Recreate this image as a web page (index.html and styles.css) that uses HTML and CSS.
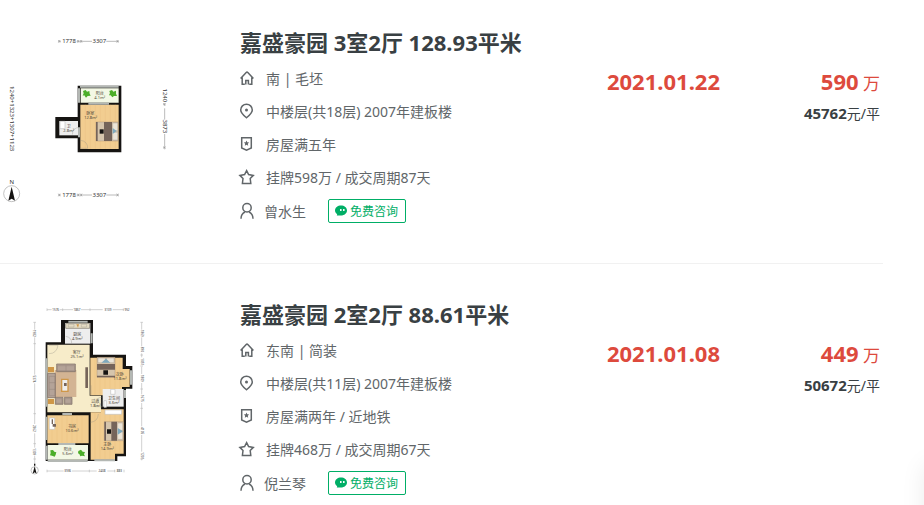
FILE: index.html
```html
<!DOCTYPE html>
<html lang="zh-CN">
<head>
    <meta charset="UTF-8">
    <meta name="viewport" content="width=device-width, initial-scale=1.0">
    <title>嘉盛豪园 成交记录</title>
    <link rel="stylesheet" href="styles.css">
</head>
<body>
    <!-- Shared icons -->
    <svg class="sprite" aria-hidden="true">
        <symbol id="icon-house" viewBox="0 0 14 14">
            <path d="M.6 7.6 6.2 1.5q.8-.8 1.6 0l5.6 6.1M2.2 6.4v6.8h2.6M11.8 6.4v6.8H9.2"/>
            <path d="M5.8 13.6V9.4h2.6v4.2"/>
        </symbol>
        <symbol id="icon-pin" viewBox="0 0 14 14">
            <path d="M6.5 13.8C3.5 11.2.7 9 .7 6a5.800 5.800 0 0 1 11.600 0c0 3-2.800 5.200-5.800 7.800z"/>
            <circle class="solid" cx="6.5" cy="6" r="1.500"/>
        </symbol>
        <symbol id="icon-badge" viewBox="0 0 14 14">
            <path d="M1.700.8h9.600v10.200L6.500 13.200 1.700 11z"/>
            <path class="solid" d="m6.500 3.500.8 1.800 1.900.2-1.400 1.300.4 1.900-1.700-1-1.700 1 .4-1.900-1.400-1.300 1.900-.2z"/>
        </symbol>
        <symbol id="icon-star" viewBox="0 0 14 14">
            <path d="m6.600.6 2 4 4.700.8-3.100 3.100.6 4.900H2.400L3 8.500-.1 5.400l4.700-.8z"/>
        </symbol>
        <symbol id="icon-person" viewBox="0 0 14 16">
            <circle cx="7" cy="4.800" r="4.200"/>
            <path d="M1 15.800c0-3.400 1.600-5.700 4-6.800M13 15.800c0-3.400-1.600-5.700-4-6.800"/>
        </symbol>
        <symbol id="icon-chat" viewBox="0 0 12 12">
            <path class="solid" d="M6 .5c3.300 0 6 2.100 6 4.900s-2.700 5-6 5H1.800l.4-1.400C.8 8.200 0 6.900 0 5.400 0 2.600 2.700.5 6 .5z"/>
            <path class="dots" d="M5.800 4v2M8.800 4v2"/>
        </symbol>
    </svg>

    <ul class="deal-list">
        <li class="deal">
            <a class="photo" href="#" aria-label="嘉盛豪园 3室2厅 户型图">
                <svg viewBox="0 21 600 600">
                    <!-- Dimensions -->
                    <g class="dim">
                        <text x="207" y="70">1778</text>
                        <text x="298" y="70">3307</text>
                        <text x="207" y="531">1778</text>
                        <text x="298" y="531">3307</text>
                        <text transform="translate(30 296) rotate(90)">1240+1323+1307+1123</text>
                        <text transform="translate(488 226) rotate(90)">1240</text>
                        <text transform="translate(488 319) rotate(90)">3873</text>
                        <path d="M175 64h8M230 64h46M319 64h38M175 525h8M230 525h46M319 525h38M494 250v8M494 265v34M494 342v46M34 205h5M34 385h5"/>
                        <path d="m175 60 5 8m-5 0 5-8m52 0 5 8m-5 0 5-8m4 0 5 8m-5 0 5-8m104 0 5 8m-5 0 5-8M175 521l5 8m-5 0 5-8m52 0 5 8m-5 0 5-8m4 0 5 8m-5 0 5-8m104 0 5 8m-5 0 5-8m134-271 8 5m-8 0 8-5m-8 130 8 5m-8 0 8-5"/>
                    </g>
                    <!-- Rooms -->
                    <path class="wall" d="M233 197h131v200H233v-42h-67v-64h67z"/>
                    <path class="tile" d="M178 303h56v43h-56z"/>
                    <path class="terrace" d="M242 205h114v43H242z"/>
                    <path class="wood" d="M241 254h115v133H241z"/>
                    <path class="plank" d="M256 254v133M271 254v133M286 254v133M301 254v133M316 254v133M331 254v133M346 254v133"/>
                    <path class="glass" d="M240 200h116M237 205v43M265 251h62M237 322v30"/>
                    <path class="door" d="M241 322q-24 0-24 22M241 361q22 2 22 24h-22"/>
                    <path class="fixture" d="M180 304h15v22h-15z"/>
                    <!-- Bed -->
                    <path class="quilt" d="M288 306h66v57h-66z"/>
                    <path class="blanket" d="M312 306h24v57h-24zM288 306h5v57h-5z"/>
                    <path class="pillow" d="M338 309h15v23h-15zM338 337h15v23h-15z"/>
                    <path class="blue" d="m338 324 12 9-12 9z"/>
                    <path class="wall" d="M299 328h12v13h-12z"/>
                    <path class="plant" d="m249 213 8-3 4 5 7-2 1 8 3 6-9 1-5 5-5-7-5 1 3-7zM328 213l8-3 4 5 8-3 0 9 3 7-9 0-5 4-5-6-5 0 3-7z"/>
                    <g class="room">
                        <text x="299" y="226">阳台</text>
                        <text x="299" y="238">4.1m²</text>
                        <text x="271" y="285">卧室</text>
                        <text x="272" y="298">12.8m²</text>
                        <text x="206" y="323">卫</text>
                        <text x="206" y="335">2.8m²</text>
                    </g>
                    <!-- Compass -->
                    <circle class="ring" cx="35" cy="521" r="24"/>
                    <path class="wall" d="m35 500 10 42-10-6-10 6z"/>
                    <text class="north" x="35" y="491">N</text>
                </svg>
            </a>
            <div class="info">
                <h2><a href="#">嘉盛豪园 3室2厅 128.93平米</a></h2>
                <p class="row"><svg class="icon"><use href="#icon-house"/></svg>南 | 毛坯</p>
                <p class="row"><svg class="icon"><use href="#icon-pin"/></svg>中楼层(共18层) 2007年建板楼</p>
                <p class="row"><svg class="icon"><use href="#icon-badge"/></svg>房屋满五年</p>
                <p class="row"><svg class="icon"><use href="#icon-star"/></svg>挂牌598万 / 成交周期87天</p>
                <div class="row agent">
                    <svg class="icon person"><use href="#icon-person"/></svg>
                    <a href="#">曾水生</a>
                    <button class="chat" type="button"><svg><use href="#icon-chat"/></svg>免费咨询</button>
                </div>
            </div>
            <div class="date">2021.01.22</div>
            <div class="price">
                <div class="total"><strong>590</strong> 万</div>
                <div class="unit"><strong>45762</strong>元/平</div>
            </div>
        </li>

        <li class="deal">
            <a class="photo" href="#" aria-label="嘉盛豪园 2室2厅 户型图">
                <svg viewBox="-60 12 600 600">
                    <!-- Dimensions -->
                    <g class="dim small">
                        <text x="107" y="48">1576</text>
                        <text x="171" y="48">1867</text>
                        <text x="264" y="48">3109</text>
                        <text x="321" y="48">952</text>
                        <text x="143" y="532">3936</text>
                        <text x="246" y="532">2408</text>
                        <text x="298" y="532">883</text>
                        <text transform="translate(40 115) rotate(90)">1982</text>
                        <text transform="translate(40 252) rotate(90)">5374</text>
                        <text transform="translate(40 400) rotate(90)">2362</text>
                        <text transform="translate(40 470) rotate(90)">1309</text>
                        <text transform="translate(362 115) rotate(90)">1869</text>
                        <text transform="translate(362 163) rotate(90)">890</text>
                        <text transform="translate(362 200) rotate(90)">1051</text>
                        <text transform="translate(362 250) rotate(90)">1809</text>
                        <text transform="translate(362 310) rotate(90)">1675</text>
                        <text transform="translate(362 407) rotate(90)">4105</text>
                        <text transform="translate(362 482) rotate(90)">1201</text>
                        <path d="M81 44h14M119 44h40M183 44h65M278 44h34M81 528h50M156 528h74M262 528h24M44 82v22M44 127v112M44 265v122M44 415v43M44 482v28M365 82v22M365 127v27M365 175v12M365 215v22M365 264v34M365 324v70M365 420v50M365 492v4"/>
                        <path d="M81 40v8M128 40v8M210 40v8M310 40v8M81 524v8M208 524v8M284 524v8M312 524v8M40 82h8M40 146h8M40 356h8M40 446h8M40 492h8M361 82h8M361 180h8M361 213h8M361 282h8M361 340h8M361 492h8"/>
                    </g>
                    <!-- Rooms -->
                    <path class="wall" d="M123 75h96v104h99v34h19v68h-19v203h-26v14H77V142h46z"/>
                    <path class="tile" d="M135 84h76v62h-76z"/>
                    <path class="living" d="M82 149h127v153h34v50H82z"/>
                    <path class="wood" d="M211 188h97v34h21v54h-23v25h-95zM82 361h124v84H82zM212 352h31v-9h68v133h-26v18h-73z"/>
                    <path class="plank" d="M225 188v112M240 188v112M255 188v112M270 188v112M285 188v112M300 188v112M96 361v84M111 361v84M126 361v84M141 361v84M156 361v84M171 361v84M186 361v84M225 352v142M240 352v142M255 343v151M270 343v151M285 343v133M300 343v133"/>
                    <path class="tile" d="M248 282h63v53h-63z"/>
                    <path class="terrace" d="M83 450h121v44H83z"/>
                    <path class="glass" d="M145 80h58M215 115v30M79 190v145M79 365v70M127 357h29M115 447h51M80 452v42M83 498h120M333 226v43M315 285v24M223 496h62"/>
                    <path class="door" d="M137 124q19 3 18 22M87 176q23 0 27-25H87M212 382q22-3 23-25M247 306q-23 2-23 29h24M213 301v-30M243 311v30"/>
                    <!-- Kitchen counter -->
                    <path class="counter" d="M137 85h72v15h-72z"/>
                    <path class="door" d="M145 88h17v8h-17zM184 88h16v8h-16z"/>
                    <path class="gold" d="M169 88h8l-3 10z"/>
                    <!-- Living room furniture -->
                    <path class="rug" d="M104 225h65v81h-65z"/>
                    <path class="sofa" d="M110 207h56v23h-56zM83 235h23v73H83zM106 307h23v21h-23zM133 307h23v21h-23z"/>
                    <path class="line" d="M112 212h52v15h-52zM138 212v15M88 244h17v58H88zM88 263h17M88 283h17M108 311h18v14h-18zM135 311h18v14h-18z"/>
                    <path class="gold" d="M84 216h18v16H84zM84 312h18v15H84zM123 251h23v40h-23z"/>
                    <path class="tile" d="M127 255h15v32h-15z"/>
                    <path class="blanket" d="M132 264h8v9h-8zM196 217h8v62h-8z"/>
                    <!-- Beds -->
                    <path class="quilt" d="M231 187h54v60h-54zM253 380h57v57h-57z"/>
                    <path class="blanket" d="M231 207h54v17h-54zM231 242h54v5h-54zM274 380h17v57h-17zM253 380h5v57h-5z"/>
                    <path class="pillow" d="M234 189h22v14h-22zM260 189h22v14h-22zM293 384h15v22h-15zM293 411h15v22h-15z"/>
                    <path class="blue" d="m244 203 14-12 13 12zM293 399l16 10-16 10z"/>
                    <path class="wall" d="M250 226h14v13h-14zM261 403h12v13h-12z"/>
                    <path class="fixture" d="M255 345h50v13h-50zM252 317h7v20h-7zM88 369h16v34H88zM272 283h13v15h-13z"/>
                    <path class="blanket" d="M95 373h4v14h-4zM98 387h10v8H98z"/>
                    <path class="plant" d="m91 466 8-1 4 5 6 2-2 7-3 6-8-3-6-1 2-7zM175 468l8-4 5 6 7 1-3 7 3 6-9-2-5 2-3-7-4-2z"/>
                    <g class="room">
                        <text x="172" y="122">厨房</text>
                        <text x="172" y="134">4.9m²</text>
                        <text x="170" y="178">客厅</text>
                        <text x="171" y="190">25.1m²</text>
                        <text x="299" y="242">次卧</text>
                        <text x="300" y="254">11.8m²</text>
                        <text x="282" y="314">卫生间</text>
                        <text x="282" y="326">3.6m²</text>
                        <text x="226" y="324">过道</text>
                        <text x="226" y="336">1.8m²</text>
                        <text x="156" y="399">书房</text>
                        <text x="156" y="411">10.6m²</text>
                        <text x="143" y="468">阳台</text>
                        <text x="143" y="480">5.6m²</text>
                        <text x="262" y="453">主卧</text>
                        <text x="262" y="465">14.9m²</text>
                    </g>
                    <!-- Compass -->
                    <circle class="ring" cx="44" cy="526" r="11"/>
                    <path class="wall" d="m44 514 6 22-6-4-6 4zM42 506h4v6h-4z"/>
                </svg>
            </a>
            <div class="info">
                <h2><a href="#">嘉盛豪园 2室2厅 88.61平米</a></h2>
                <p class="row"><svg class="icon"><use href="#icon-house"/></svg>东南 | 简装</p>
                <p class="row"><svg class="icon"><use href="#icon-pin"/></svg>中楼层(共11层) 2007年建板楼</p>
                <p class="row"><svg class="icon"><use href="#icon-badge"/></svg>房屋满两年 / 近地铁</p>
                <p class="row"><svg class="icon"><use href="#icon-star"/></svg>挂牌468万 / 成交周期67天</p>
                <div class="row agent">
                    <svg class="icon person"><use href="#icon-person"/></svg>
                    <a href="#">倪兰琴</a>
                    <button class="chat" type="button"><svg><use href="#icon-chat"/></svg>免费咨询</button>
                </div>
            </div>
            <div class="date">2021.01.08</div>
            <div class="price">
                <div class="total"><strong>449</strong> 万</div>
                <div class="unit"><strong>50672</strong>元/平</div>
            </div>
        </li>
    </ul>
</body>
</html>
```
FILE: styles.css
```css
* {
    box-sizing: border-box;
    margin: 0;
    padding: 0;
}
body {
    font-family: "Noto Sans", "Noto Sans CJK SC", sans-serif;
    font-size: 14px;
    color: #616669;
    background: #fff;
    overflow-x: hidden;
}
body::after {
    content: "";
    position: fixed;
    left: 100%;
    bottom: -80px;
    width: 40px;
    height: 120px;
    box-shadow: 0 0 24px rgba(0, 0, 0, 0.08);
}
a {
    color: inherit;
    text-decoration: none;
}
.sprite {
    display: none;
}

/* List */
.deal-list {
    list-style: none;
    margin-right: 41px;
}
.deal {
    display: grid;
    grid-template-columns: 200px 1fr auto 163px;
    padding: 35px 0 34px;
    border-bottom: 1px solid #f1f1f1;
}
.deal:first-child {
    padding-top: 27px;
}
.deal:last-child {
    padding-bottom: 0;
    border-bottom: none;
}
.photo svg {
    display: block;
    width: 100%;
}

/* Details */
.info {
    padding-left: 40px;
}
.info h2 {
    font-size: 22px;
    line-height: 30px;
    color: #394043;
    margin-bottom: 4px;
    white-space: nowrap;
}
.row {
    display: flex;
    align-items: center;
    gap: 12px;
    height: 33px;
    white-space: nowrap;
}
.agent {
    gap: 10px;
    height: 36px;
}
.icon {
    width: 14px;
    height: 14px;
    fill: none;
    stroke: #616669;
    stroke-width: 1.5;
    overflow: visible;
}
.icon.person {
    height: 16px;
}
symbol {
    overflow: visible;
}
.solid {
    fill: #616669;
    stroke: none;
}
.chat {
    display: flex;
    align-items: center;
    gap: 3px;
    height: 24px;
    margin-left: 12px;
    padding: 0 7px 0 6px;
    font-family: inherit;
    font-size: 12px;
    color: #00ae66;
    background: #fff;
    border: 1px solid #00ae66;
    border-radius: 2px;
    cursor: pointer;
}
.chat svg {
    width: 12px;
    height: 12px;
}
#icon-chat .solid {
    fill: #00ae66;
}
#icon-chat .dots {
    stroke: #fff;
    stroke-width: 1.5;
}

/* Date and price */
.date,
.price {
    padding-top: 38px;
    line-height: 32px;
}
.date {
    font-size: 22px;
    font-weight: bold;
    color: #dd4a3d;
}
.price {
    padding-right: 3px;
    text-align: right;
}
.total {
    font-size: 17px;
    color: #dd4a3d;
}
.total strong {
    font-size: 22px;
}
.unit {
    line-height: 26px;
    color: #394043;
}
.unit strong {
    font-size: 15px;
}

/* Floor plans */
.wall { fill: #161412; }
.tile { fill: #eeeeee; }
.living { fill: #f7ecc9; }
.wood { fill: #f2cd90; }
.plank { stroke: #e6bd7d; stroke-width: 1; }
.terrace { fill: #f3f8e5; }
.glass { fill: none; stroke: #b4b8b4; stroke-width: 6; }
.door { fill: none; stroke: #8f8b82; stroke-width: 1; }
.counter { fill: #e5dcc4; stroke: #7a7468; stroke-width: 2; }
.rug { fill: #d3b493; }
.sofa { fill: #b4a398; stroke: #75675f; stroke-width: 2; }
.line { fill: none; stroke: #85766c; stroke-width: 1; }
.gold { fill: #cf9748; }
.quilt { fill: #d6c5ac; stroke: #98846c; stroke-width: 1; }
.blanket { fill: #75645a; }
.pillow { fill: #ece5d8; stroke: #a39683; stroke-width: 1; }
.blue { fill: #7fa9bd; }
.fixture { fill: #fff; stroke: #c2c2c2; stroke-width: 2; }
.plant { fill: #4cae29; }
.ring { fill: none; stroke: #a5a5a5; stroke-width: 2; }
.room {
    font-size: 12px;
    fill: #4c4438;
    text-anchor: middle;
}
.dim {
    font-size: 18px;
    fill: #333;
    text-anchor: middle;
}
.dim.small {
    font-size: 9px;
}
.dim path {
    fill: none;
    stroke: #999;
    stroke-width: 2;
}
.dim.small path {
    stroke: #bbb;
}
.north {
    font-size: 18px;
    fill: #333;
    text-anchor: middle;
}
```
